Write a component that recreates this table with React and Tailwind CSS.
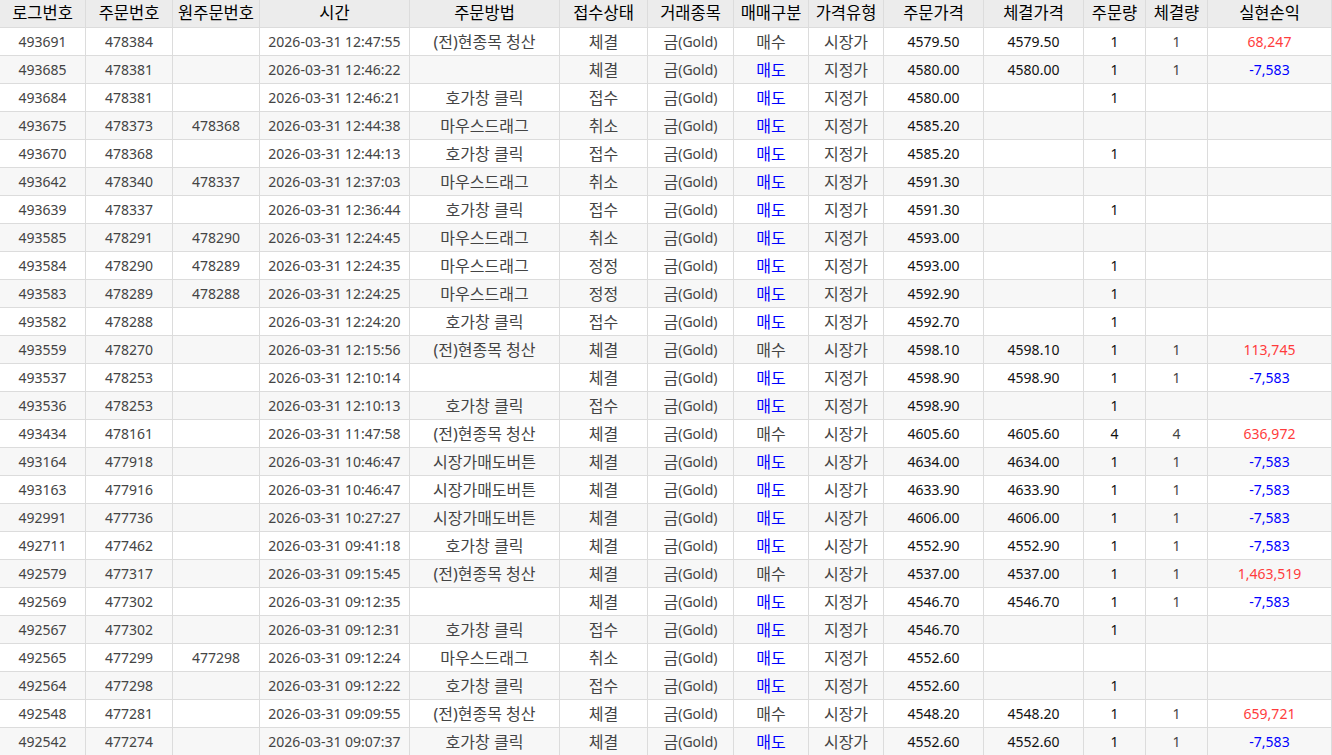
const cols = [
    { key: 'log', label: '로그번호' },
    { key: 'order', label: '주문번호' },
    { key: 'orig', label: '원주문번호' },
    { key: 'time', label: '시간' },
    { key: 'method', label: '주문방법' },
    { key: 'status', label: '접수상태' },
    { key: 'item', label: '거래종목' },
    { key: 'side', label: '매매구분' },
    { key: 'ptype', label: '가격유형' },
    { key: 'price', label: '주문가격' },
    { key: 'fill', label: '체결가격' },
    { key: 'qty', label: '주문량' },
    { key: 'fqty', label: '체결량' },
    { key: 'pnl', label: '실현손익' },
];

const rows = [
    ['493691', '478384', '', '12:47:55', '(전)현종목 청산', '체결', '매수', '시장가', '4579.50', '4579.50', '1', '1', '68,247'],
    ['493685', '478381', '', '12:46:22', '', '체결', '매도', '지정가', '4580.00', '4580.00', '1', '1', '-7,583'],
    ['493684', '478381', '', '12:46:21', '호가창 클릭', '접수', '매도', '지정가', '4580.00', '', '1', '', ''],
    ['493675', '478373', '478368', '12:44:38', '마우스드래그', '취소', '매도', '지정가', '4585.20', '', '', '', ''],
    ['493670', '478368', '', '12:44:13', '호가창 클릭', '접수', '매도', '지정가', '4585.20', '', '1', '', ''],
    ['493642', '478340', '478337', '12:37:03', '마우스드래그', '취소', '매도', '지정가', '4591.30', '', '', '', ''],
    ['493639', '478337', '', '12:36:44', '호가창 클릭', '접수', '매도', '지정가', '4591.30', '', '1', '', ''],
    ['493585', '478291', '478290', '12:24:45', '마우스드래그', '취소', '매도', '지정가', '4593.00', '', '', '', ''],
    ['493584', '478290', '478289', '12:24:35', '마우스드래그', '정정', '매도', '지정가', '4593.00', '', '1', '', ''],
    ['493583', '478289', '478288', '12:24:25', '마우스드래그', '정정', '매도', '지정가', '4592.90', '', '1', '', ''],
    ['493582', '478288', '', '12:24:20', '호가창 클릭', '접수', '매도', '지정가', '4592.70', '', '1', '', ''],
    ['493559', '478270', '', '12:15:56', '(전)현종목 청산', '체결', '매수', '시장가', '4598.10', '4598.10', '1', '1', '113,745'],
    ['493537', '478253', '', '12:10:14', '', '체결', '매도', '지정가', '4598.90', '4598.90', '1', '1', '-7,583'],
    ['493536', '478253', '', '12:10:13', '호가창 클릭', '접수', '매도', '지정가', '4598.90', '', '1', '', ''],
    ['493434', '478161', '', '11:47:58', '(전)현종목 청산', '체결', '매수', '시장가', '4605.60', '4605.60', '4', '4', '636,972'],
    ['493164', '477918', '', '10:46:47', '시장가매도버튼', '체결', '매도', '시장가', '4634.00', '4634.00', '1', '1', '-7,583'],
    ['493163', '477916', '', '10:46:47', '시장가매도버튼', '체결', '매도', '시장가', '4633.90', '4633.90', '1', '1', '-7,583'],
    ['492991', '477736', '', '10:27:27', '시장가매도버튼', '체결', '매도', '시장가', '4606.00', '4606.00', '1', '1', '-7,583'],
    ['492711', '477462', '', '09:41:18', '호가창 클릭', '체결', '매도', '시장가', '4552.90', '4552.90', '1', '1', '-7,583'],
    ['492579', '477317', '', '09:15:45', '(전)현종목 청산', '체결', '매수', '시장가', '4537.00', '4537.00', '1', '1', '1,463,519'],
    ['492569', '477302', '', '09:12:35', '', '체결', '매도', '지정가', '4546.70', '4546.70', '1', '1', '-7,583'],
    ['492567', '477302', '', '09:12:31', '호가창 클릭', '접수', '매도', '지정가', '4546.70', '', '1', '', ''],
    ['492565', '477299', '477298', '09:12:24', '마우스드래그', '취소', '매도', '지정가', '4552.60', '', '', '', ''],
    ['492564', '477298', '', '09:12:22', '호가창 클릭', '접수', '매도', '지정가', '4552.60', '', '1', '', ''],
    ['492548', '477281', '', '09:09:55', '(전)현종목 청산', '체결', '매수', '시장가', '4548.20', '4548.20', '1', '1', '659,721'],
    ['492542', '477274', '', '09:07:37', '호가창 클릭', '체결', '매도', '시장가', '4552.60', '4552.60', '1', '1', '-7,583'],
];

const gridCols = 'grid grid-cols-[86px_87px_87px_150px_150px_88px_86px_75px_75px_100px_100px_62px_62px_124px]';

const cellBase = 'h-[28px] flex items-center justify-center border-r border-b border-[#dcdcdc] whitespace-nowrap';

// korean-only cells render a touch bigger, like the original grid font
const ko = `${cellBase} text-[16px]`;

const App = () => {
    return (
        <div
            className="w-[1332px] h-[755px] overflow-hidden bg-white"
            style={{ fontFamily: '"Noto Sans", "Noto Sans CJK KR", sans-serif' }}
        >
            {/* Header */}
            <div className={`${gridCols} bg-[#ececec]`}>
                {cols.map((c) => (
                    <div key={c.key} className={`${cellBase} text-[16.5px] text-black`}>
                        {c.label}
                    </div>
                ))}
            </div>

            {/* Body */}
            {rows.map((r, i) => {
                const [log, order, orig, time, method, status, side, ptype, price, fill, qty, fqty, pnl] = r;
                const bg = i % 2 === 0 ? 'bg-white' : 'bg-[#f7f7f7]';
                const pnlColor = pnl.startsWith('-') ? 'text-[#0000ff]' : 'text-[#ff3c3c]';
                const sideColor = side === '매도' ? 'text-[#0000ff]' : 'text-[#444]';
                return (
                    <div key={log} className={`${gridCols} ${bg} text-[14px] text-[#444]`}>
                        <div className={cellBase}>{log}</div>
                        <div className={cellBase}>{order}</div>
                        <div className={cellBase}>{orig}</div>
                        <div className={cellBase}>2026-03-31 {time}</div>
                        <div className={ko}>{method}</div>
                        <div className={ko}>{status}</div>
                        <div className={cellBase}>
                            <span className="text-[16px]">금</span>(Gold)
                        </div>
                        <div className={`${ko} ${sideColor}`}>{side}</div>
                        <div className={ko}>{ptype}</div>
                        <div className={`${cellBase} text-[#111]`}>{price}</div>
                        <div className={`${cellBase} text-[#111]`}>{fill}</div>
                        <div className={`${cellBase} text-[#111]`}>{qty}</div>
                        <div className={cellBase}>{fqty}</div>
                        <div className={`${cellBase} ${pnlColor}`}>{pnl}</div>
                    </div>
                );
            })}
        </div>
    );
};

export default App;
